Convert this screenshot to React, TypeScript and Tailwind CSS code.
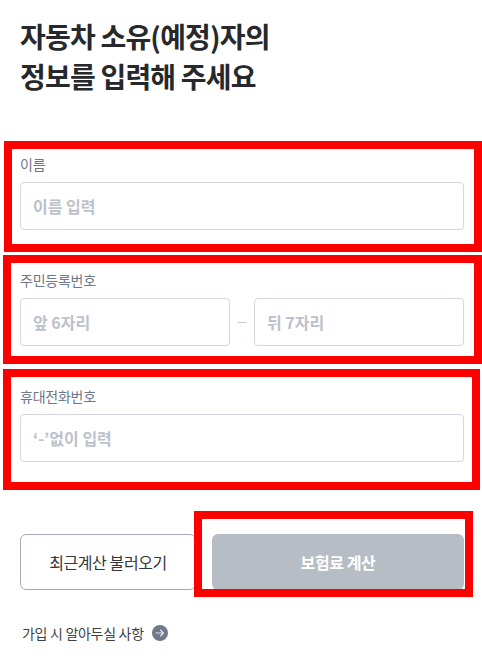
const FONT = "font-['Noto_Sans_CJK_KR','Noto_Sans',sans-serif]"

function Field({ placeholder }: { placeholder: string }) {
  return (
    <div className="flex h-12 min-w-0 flex-1 items-center rounded border border-[#d3d7df] bg-white px-3 text-[16px] font-bold text-[#bcc1cb]">
      {placeholder}
    </div>
  )
}

function Label({ children }: { children: string }) {
  return <div className="flex h-[18px] items-center text-[14px] leading-[18px] tracking-[-0.25px] text-[#6f7687]">{children}</div>
}

// annotation rectangles drawn on top of the form
const MARKS = [
  'left-[4px] top-[141px] h-[111px] w-[478px]',
  'left-[3px] top-[255px] h-[109px] w-[479px]',
  'left-[3px] top-[369px] h-[121px] w-[477px]',
  'left-[194px] top-[511px] h-[86px] w-[279px]',
]

export default function App() {
  return (
    <div className={`relative h-[666px] w-[482px] overflow-hidden bg-white pl-[20px] pr-[18px] ${FONT}`}>
      <h1 className="pt-[16px] text-[28px] font-bold leading-[40px] tracking-[-0.8px] text-[#26282c]">
        자동차 소유(예정)자의
        <br />
        정보를 입력해 주세요
      </h1>

      <div className="mt-[59px]">
        <Label>이름</Label>
        <div className="mt-[9px] flex">
          <Field placeholder="이름 입력" />
        </div>
      </div>

      <div className="mt-[41px]">
        <Label>주민등록번호</Label>
        <div className="mt-[9px] flex items-center">
          <Field placeholder="앞 6자리" />
          <span className="mx-[8px] h-px w-[8px] bg-[#c4c8d1]" />
          <Field placeholder="뒤 7자리" />
        </div>
      </div>

      <div className="mt-[41px]">
        <Label>휴대전화번호</Label>
        <div className="mt-[9px] flex">
          <Field placeholder="‘-’없이 입력" />
        </div>
      </div>

      <div className="mt-[72px] flex gap-[16px]">
        <button className="h-14 w-[176px] rounded-md border border-[#a5acba] bg-white text-[16px] tracking-[-0.4px] text-[#33363c]">
          최근계산 불러오기
        </button>
        <button className="h-14 flex-1 rounded-md bg-[#b7bdc5] text-[16px] font-bold tracking-[-0.4px] text-white">
          보험료 계산
        </button>
      </div>

      <div className="mt-[33px] flex items-center gap-[8px] pl-[2px] text-[14px] leading-[20px] tracking-[-0.3px] text-[#3d4046]">
        <span>가입 시 알아두실 사항</span>
        <svg width="16" height="16" viewBox="0 0 16 16" fill="none">
          <circle cx="8" cy="8" r="8" fill="#717889" />
          <path d="M4 8h7.5M8.5 5l3 3-3 3" stroke="#e4e6ea" strokeWidth="1.1" strokeLinecap="round" strokeLinejoin="round" />
        </svg>
      </div>

      {MARKS.map((m) => (
        <div key={m} className={`pointer-events-none absolute border-8 border-[#ff0000] ${m}`} />
      ))}
    </div>
  )
}
